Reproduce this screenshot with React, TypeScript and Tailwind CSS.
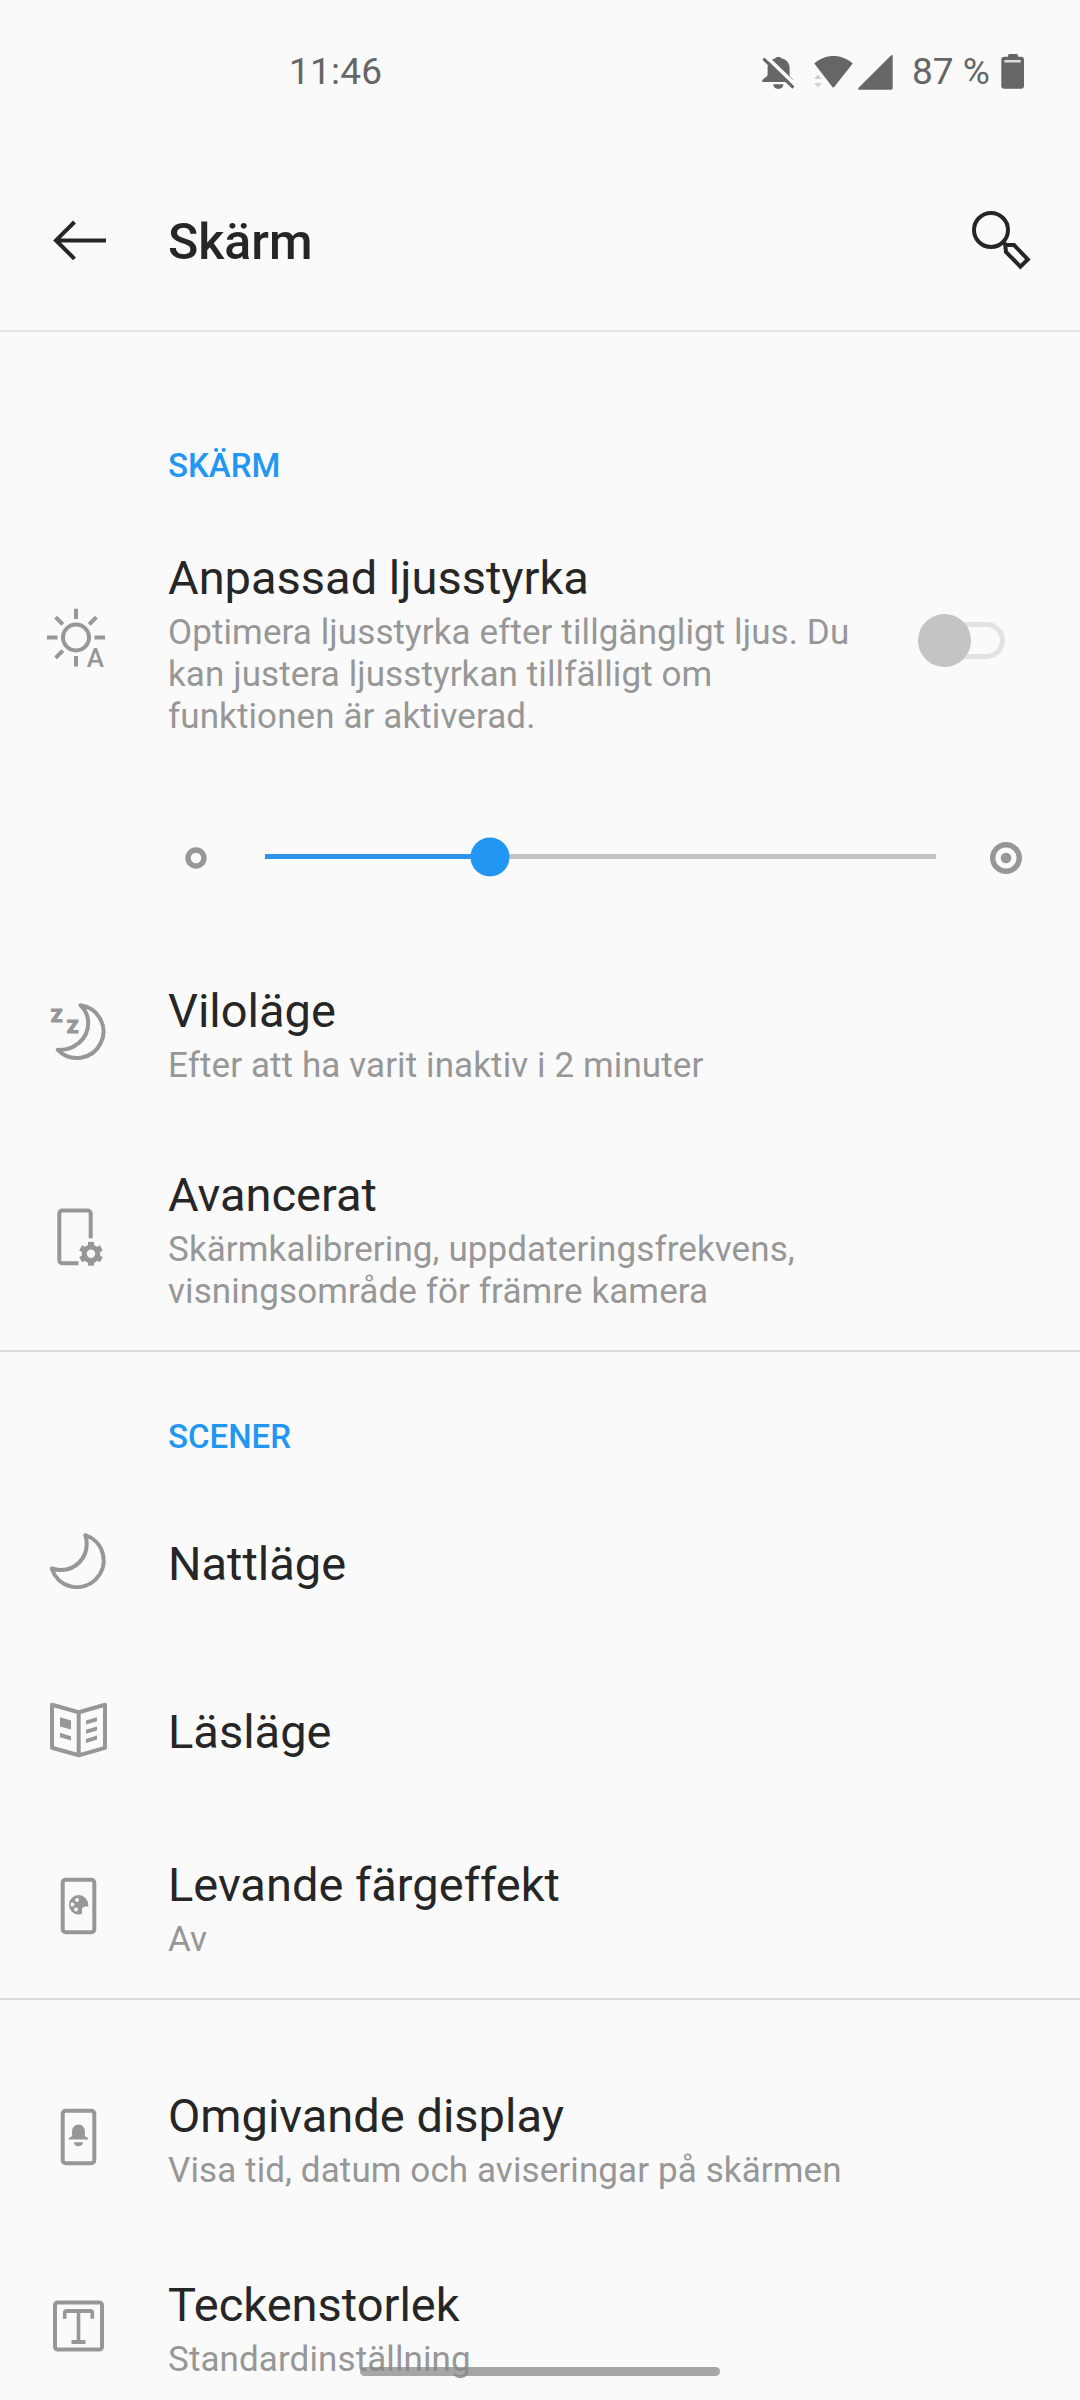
import { useState } from 'react';
import type { ReactNode } from 'react';
import clsx from 'clsx';
import { Type } from 'lucide-react';

interface SettingRowProps {
  title: string;
  summary?: string;
  icon: ReactNode;
  className: string;
  children?: ReactNode;
}

function IconBox({ children }: { children: ReactNode }) {
  return (
    <svg width="80" height="80" viewBox="0 0 80 80" fill="none" stroke="#979797" strokeWidth="4">
      {children}
    </svg>
  );
}

function BrightnessIcon() {
  return (
    <IconBox>
      <g transform="translate(0 -1)">
        <circle cx="36" cy="37.5" r="13" />
        <path d="M36 8.7v10.3M36 56v10.5M7 37.5h10.5M54.5 37.5h10.5" />
        <path d="M15.6 17.1l7.2 7.2M56.4 17.1l-7.2 7.2M15.6 57.9l7.2-7.2" />
        <text
          x="46.7"
          y="66.5"
          fill="#979797"
          stroke="none"
          className="font-[Roboto,sans-serif] text-[26px] font-medium"
        >
          A
        </text>
      </g>
    </IconBox>
  );
}

function SleepIcon() {
  return (
    <IconBox>
      <path
        strokeLinejoin="round"
        d="M40.5 13.2A26.5 26.5 0 1 1 17.8 57.8C34 59 48.2 47 48.2 31C48.2 24 45.5 18 40.5 13.2Z"
      />
      <g
        fill="#979797"
        strokeWidth="1.2"
        className="font-[Roboto,sans-serif] text-[18.5px] font-black"
      >
        <text x="11" y="30">Z</text>
        <text x="27" y="40.7">Z</text>
      </g>
    </IconBox>
  );
}

function AdvancedIcon() {
  return (
    <IconBox>
      <path d="M50.7 41.2V16.5a3 3 0 0 0-3-3H22.3a3 3 0 0 0-3 3v46.7a3 3 0 0 0 3 3H38.5" />
      <circle cx="51" cy="56.8" r="6.8" strokeWidth="5.2" />
      {[0, 60, 120, 180, 240, 300].map((angle) => (
        <path key={angle} strokeWidth="6" d="M51 49.5v-4.6" transform={`rotate(${angle} 51 56.8)`} />
      ))}
    </IconBox>
  );
}

function MoonIcon() {
  return (
    <IconBox>
      <path
        strokeLinejoin="round"
        d="M45.3 14.2A26.6 26.6 0 1 1 11.7 47.5C15 48.7 18 49 21 49C36 49 46.7 37 46.7 23C46.7 20 46.3 17 45.3 14.2Z"
      />
    </IconBox>
  );
}

function BookIcon() {
  return (
    <IconBox>
      <path strokeLinejoin="round" d="M12 15.8L38.7 23.2L65 15.8V58.8L38.7 66.3L12 58.8ZM38.7 23.2V66.3" />
      <g fill="#979797" stroke="none">
        <path d="M20 28.2L31 31.5V40.5L20 37.5Z" />
        <path d="M20 43.8L31 47.2V51.5L20 48.2Z" />
        <path d="M46 31.5L57 28.2V32.2L46 35.5Z" />
        <path d="M46 40.7L57 37.4V41.4L46 44.7Z" />
        <path d="M46 49.9L57 46.6V50.6L46 53.9Z" />
      </g>
    </IconBox>
  );
}

function PhoneFrame() {
  return <rect x="22.7" y="13.8" width="31.6" height="52.4" rx="3" />;
}

function ColorEffectIcon() {
  return (
    <IconBox>
      <PhoneFrame />
      <path
        fill="#979797"
        stroke="none"
        d="M48.3 38.8a9.7 9.7 0 1 0-9.6 9.7c1.4 0 2.4-.2 3.3-.7v-3.5c0-2.4 1.2-3.7 3.6-3.7h2.5c.2-.6.2-1.2.2-1.8Z"
      />
      <g fill="#fafafa" stroke="none">
        <circle cx="37" cy="33.9" r="2" />
        <circle cx="32.4" cy="38.5" r="2" />
        <circle cx="36" cy="43.6" r="2" />
      </g>
    </IconBox>
  );
}

function AmbientIcon() {
  return (
    <IconBox>
      <PhoneFrame />
      <g fill="#979797" stroke="none">
        <path d="M28.7 42.5v-1.2l3.4-2.4v-4.6c0-3.9 2.9-6.8 6.4-6.8s6.4 2.9 6.4 6.8v4.6l3.4 2.4v1.2Z" />
        <path d="M34 45.2h9c0 2.4-2 4-4.5 4s-4.5-1.6-4.5-4Z" />
      </g>
    </IconBox>
  );
}

function FontSizeIcon() {
  return (
    <IconBox>
      <rect x="15" y="16.5" width="47" height="47" rx="2.5" />
      <Type
        x={17.8}
        y={17.2}
        width={41.4}
        height={46.5}
        preserveAspectRatio="none"
        color="#979797"
        strokeWidth={2.1}
        strokeLinecap="square"
      />
    </IconBox>
  );
}

function StatusBar() {
  return (
    <div className="flex h-[150px] items-start pt-[50px] text-[37px] leading-[43px] text-[#666666]">
      <span className="w-[470px] pl-[289px] tracking-[0.2px]">11:46</span>
      <svg width="140" height="44" viewBox="0 0 140 44" fill="#666666" className="ml-[290px]">
        <path d="M2.3 32v-2l5.3-4.5V18C7.6 12.5 11 9.2 15.5 8.2C15.8 6.7 21 6.7 21.3 8.2C26.5 9.2 29.6 13 29.6 18v8l3.5 3.5v2.5Z" />
        <path d="M13.3 34.3h10c0 2.8-2.2 4.7-5 4.7s-5-1.9-5-4.7Z" />
        <path d="M5.2 5.6L36 35.4" stroke="#fafafa" strokeWidth="3.6" />
        <path d="M3.4 8.6L33.4 37.7" stroke="#666666" strokeWidth="3" />
        <path d="M54.3 13.6C65 3.6 82 3.6 92.7 13.6L74 37.2q-.7.8-1.4 0Z" />
        <path d="M54 29l4-4.4l4 4.4ZM54 33h8l-4 4.2Z" fill="#d0d0d0" />
        <path d="M99 39.7H131q1.7 0 1.7-1.7V6q0-1.7-1.5-.8L98.4 38q-.8 1.2.6 1.7Z" />
      </svg>
      <span className="ml-[12px] w-[89px] whitespace-nowrap">87 %</span>
      <svg width="24" height="44" viewBox="0 0 24 44" fill="#666666">
        <rect x="7" y="4" width="10" height="5" rx="1.5" />
        <rect x="0.3" y="6.7" width="22.7" height="32" rx="3" />
        <rect x="3.3" y="10" width="16.6" height="2.4" rx="1" fill="#dddddd" />
      </svg>
    </div>
  );
}

function Toolbar() {
  return (
    <header className="flex h-[182px] items-center border-b-2 border-[#e5e5e5]">
      <button className="w-[168px] pl-[50px]">
        <svg width="60" height="60" viewBox="0 0 60 60" fill="none" stroke="#262626" strokeWidth="4">
          <path d="M56 30.4H6M24.5 12L6 30.4L24.5 48.8" />
        </svg>
      </button>
      <h1 className="flex-1 pt-1 text-[50px] leading-[58px] font-medium text-[#262626]">Skärm</h1>
      <button className="pr-[49px]">
        <svg width="64" height="64" viewBox="0 0 64 64" fill="none" stroke="#262626" strokeWidth="4">
          <circle cx="24" cy="22" r="17" />
          <path d="M38.2 36.7L47 37L60.8 51.4L53.4 58.6L39 44ZM35 33l4 4" />
        </svg>
      </button>
    </header>
  );
}

function SectionHeader({ children, className }: { children: ReactNode; className: string }) {
  return (
    <h2 className={clsx('pl-[168px] text-[33px] leading-[40px] font-medium text-[#2196f3]', className)}>
      {children}
    </h2>
  );
}

function SettingRow({ title, summary, icon, className, children }: SettingRowProps) {
  return (
    <div className={clsx('flex shrink-0 items-center', className)}>
      <div className="w-[168px] pb-1 pl-10">{icon}</div>
      <div className={clsx('w-[700px]', summary ? 'pt-px' : 'pt-0.5')}>
        <div className="text-[47px] leading-[58px] text-[#262626]">{title}</div>
        {summary && (
          <div className="mt-[5px] text-[35px] leading-[42px] tracking-[0.1px] whitespace-pre-line text-[#979797]">
            {summary}
          </div>
        )}
      </div>
      {children}
    </div>
  );
}

function Switch({ checked, onChange }: { checked: boolean; onChange: (checked: boolean) => void }) {
  return (
    <button
      role="switch"
      aria-checked={checked}
      onClick={() => onChange(!checked)}
      className="relative mb-[5px] ml-[50px] h-[53px] w-[87px]"
    >
      <span className="absolute top-2 right-0 h-[37px] w-[70px] rounded-full border-5 border-[#e2e2e2]" />
      <span
        className={clsx(
          'absolute top-0 size-[53px] rounded-full',
          checked ? 'right-0 bg-[#2196f3]' : 'left-0 bg-[#c4c4c4]'
        )}
      />
    </button>
  );
}

function BrightnessSlider({ value }: { value: number }) {
  return (
    <div className="flex h-[179px] items-center pl-[185px]">
      <svg width="22" height="25" viewBox="0 0 22 25" fill="none" stroke="#979797" strokeWidth="5.4">
        <circle cx="11" cy="14" r="8" />
      </svg>
      <div className="relative ml-[58px] h-[5px] w-[671px] bg-[#c4c4c4]">
        <div className="h-full bg-[#2d93e8]" style={{ width: `${value}%` }} />
        <div
          className="absolute top-1/2 size-[39px] -translate-1/2 rounded-full bg-[#2196f3]"
          style={{ left: `${value}%` }}
        />
      </div>
      <svg width="34" height="37" viewBox="0 0 34 37" fill="none" className="ml-[53px]">
        <circle cx="17" cy="20" r="13.3" stroke="#979797" strokeWidth="5.4" />
        <circle cx="17" cy="20" r="5.3" fill="#979797" />
      </svg>
    </div>
  );
}

function Divider() {
  return <div className="h-0.5 shrink-0 bg-[#dcdcdc]" />;
}

export default function App() {
  const [adaptive, setAdaptive] = useState(false);

  return (
    <div className="relative h-[2400px] w-[1080px] overflow-hidden bg-[#fafafa] font-[Roboto,sans-serif]">
      <StatusBar />
      <Toolbar />

      <SectionHeader className="pt-[114px] pb-[33px]">SKÄRM</SectionHeader>
      <SettingRow
        className="h-[248px]"
        icon={<BrightnessIcon />}
        title="Anpassad ljusstyrka"
        summary={'Optimera ljusstyrka efter tillgängligt ljus. Du\nkan justera ljusstyrkan tillfälligt om\nfunktionen är aktiverad.'}
      >
        <Switch checked={adaptive} onChange={setAdaptive} />
      </SettingRow>
      <BrightnessSlider value={33.5} />
      <SettingRow
        className="h-[176px]"
        icon={<SleepIcon />}
        title="Viloläge"
        summary="Efter att ha varit inaktiv i 2 minuter"
      />
      <SettingRow
        className="mt-1.5 h-[222px]"
        icon={<AdvancedIcon />}
        title="Avancerat"
        summary={'Skärmkalibrering, uppdateringsfrekvens,\nvisningsområde för främre kamera'}
      />
      <Divider />

      <SectionHeader className="pt-[65px] pb-[22px]">SCENER</SectionHeader>
      <SettingRow className="h-[168px]" icon={<MoonIcon />} title="Nattläge" />
      <SettingRow className="h-[168px]" icon={<BookIcon />} title="Läsläge" />
      <SettingRow
        className="mt-[3px] h-[180px]"
        icon={<ColorEffectIcon />}
        title="Levande färgeffekt"
        summary="Av"
      />
      <Divider />

      <SettingRow
        className="mt-[51px] h-[176px]"
        icon={<AmbientIcon />}
        title="Omgivande display"
        summary="Visa tid, datum och aviseringar på skärmen"
      />
      <SettingRow
        className="mt-[13px] h-[176px]"
        icon={<FontSizeIcon />}
        title="Teckenstorlek"
        summary="Standardinställning"
      />

      {/* Gesture navigation handle */}
      <div className="absolute top-[2367px] left-[360px] h-[9px] w-[360px] rounded-full bg-[#878787]/73" />
    </div>
  );
}
